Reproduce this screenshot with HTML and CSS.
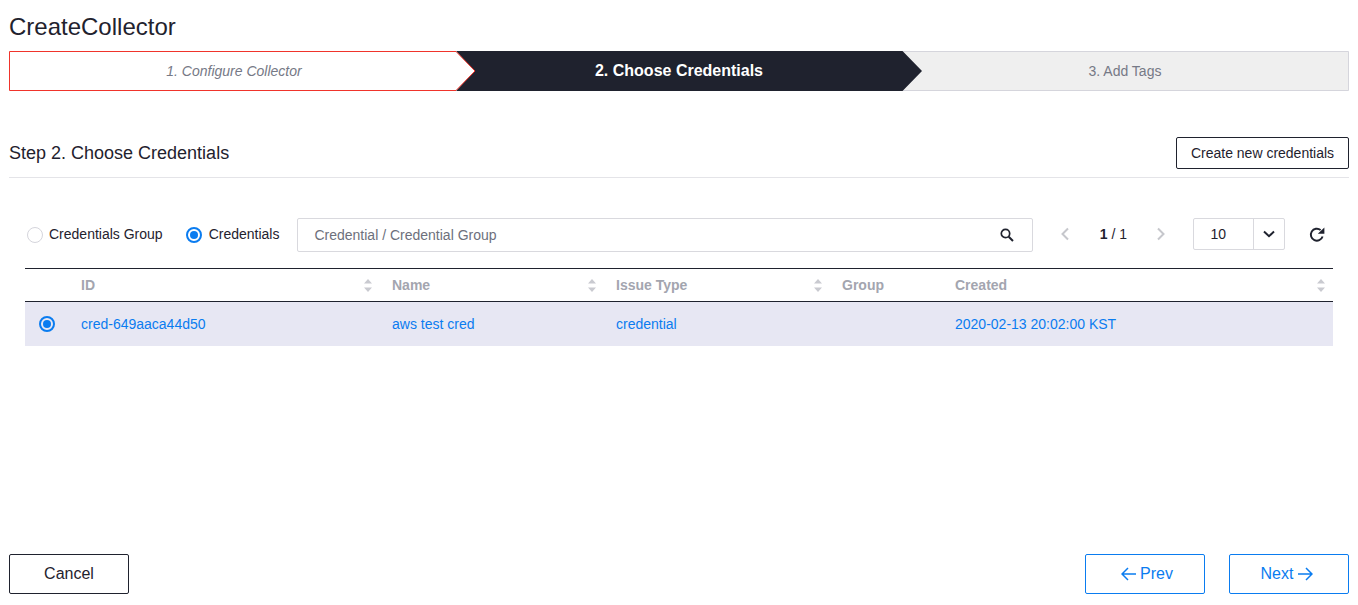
FILE: index.html
```html
<!DOCTYPE html>
<html lang="en">
<head>
<meta charset="utf-8">
<title>CreateCollector</title>
<link rel="stylesheet" href="styles.css">
</head>
<body>
<div class="page">
  <h1 class="title">CreateCollector</h1>
  <div class="steps">
    <svg class="steps-bg" width="1340" height="40" viewBox="0 0 1340 40">
      <path d="M893 0.5H1339.5V39.5H893L912 20Z" fill="#efefef" stroke="#d5d5dc"/>
      <path d="M447 0H893.5L913 20L893.5 40H447L465 20Z" fill="#1f222e"/>
      <path d="M0.5 0.5H447L466 20L447 39.5H0.5Z" fill="#fff" stroke="#f0342b"/>
    </svg>
    <div class="step step-done">1. Configure Collector</div>
    <div class="step step-active">2. Choose Credentials</div>
    <div class="step step-next">3. Add Tags</div>
  </div>
  <div class="section-head">
    <h2 class="section-title">Step 2. Choose Credentials</h2>
    <button class="btn-create">Create new credentials</button>
  </div>
  <div class="toolbar">
    <label class="radio-label"><span class="radio"></span><span class="radio-text">Credentials Group</span></label>
    <label class="radio-label radio-label-on"><span class="radio radio-on"></span><span class="radio-text">Credentials</span></label>
    <div class="search">
      <span class="search-text">Credential / Credential Group</span>
      <svg class="search-icon" width="16" height="16" viewBox="0 0 16 16"><circle cx="6.5" cy="6.5" r="4.2" fill="none" stroke="#1f222e" stroke-width="1.7"/><path d="M9.7 9.7L14 14" stroke="#1f222e" stroke-width="2"/></svg>
    </div>
    <div class="pager">
      <svg width="10" height="14" viewBox="0 0 10 14"><path d="M8 1.5L2.5 7L8 12.5" fill="none" stroke="#c6c7cc" stroke-width="2"/></svg>
      <span class="pager-text"><b>1</b> / 1</span>
      <svg width="10" height="14" viewBox="0 0 10 14"><path d="M2 1.5L7.5 7L2 12.5" fill="none" stroke="#c6c7cc" stroke-width="2"/></svg>
    </div>
    <div class="size-select">
      <span class="size-value">10</span>
      <span class="size-arrow"><svg width="12" height="8" viewBox="0 0 12 8"><path d="M1 1.5L6 6.2L11 1.5" fill="none" stroke="#1f222e" stroke-width="2"/></svg></span>
    </div>
    <svg class="refresh" width="16" height="16" viewBox="0 0 16 16"><path d="M13.6 9.5A6 6 0 1 1 11.6 3" fill="none" stroke="#1f222e" stroke-width="1.9"/><path d="M8.8 6.8H15.4V0.4Z" fill="#1f222e"/></svg>
  </div>
  <table class="grid">
    <colgroup><col class="c0"><col class="c1"><col class="c2"><col class="c3"><col class="c4"><col></colgroup>
    <thead>
      <tr>
        <th></th>
        <th><div class="th-in">ID<svg class="sort" width="8" height="13" viewBox="0 0 8 13"><path d="M4 0L8 4.5H0ZM0 8.5H8L4 13Z"/></svg></div></th>
        <th><div class="th-in">Name<svg class="sort" width="8" height="13" viewBox="0 0 8 13"><path d="M4 0L8 4.5H0ZM0 8.5H8L4 13Z"/></svg></div></th>
        <th><div class="th-in">Issue Type<svg class="sort" width="8" height="13" viewBox="0 0 8 13"><path d="M4 0L8 4.5H0ZM0 8.5H8L4 13Z"/></svg></div></th>
        <th><div class="th-in">Group</div></th>
        <th><div class="th-in">Created<svg class="sort" width="8" height="13" viewBox="0 0 8 13"><path d="M4 0L8 4.5H0ZM0 8.5H8L4 13Z"/></svg></div></th>
      </tr>
    </thead>
    <tbody>
      <tr>
        <td class="td-radio"><span class="radio radio-on"></span></td>
        <td>cred-649aaca44d50</td>
        <td>aws test cred</td>
        <td>credential</td>
        <td></td>
        <td>2020-02-13 20:02:00 KST</td>
      </tr>
    </tbody>
  </table>
  <div class="footer">
    <button class="btn btn-cancel">Cancel</button>
    <div class="footer-right">
      <button class="btn btn-blue btn-prev"><svg width="15" height="14" viewBox="0 0 15 14"><path d="M7 1L1 7L7 13M1 7H15" fill="none" stroke="#0a7cf0" stroke-width="1.5"/></svg>Prev</button>
      <button class="btn btn-blue btn-next">Next<svg width="15" height="14" viewBox="0 0 15 14"><path d="M8 1L14 7L8 13M14 7H0" fill="none" stroke="#0a7cf0" stroke-width="1.5"/></svg></button>
    </div>
  </div>
</div>
</body>
</html>
```
FILE: styles.css
```css
* { box-sizing: border-box; }
html, body { margin: 0; padding: 0; background: #fff; }
body { font-family: "Liberation Sans", Arial, sans-serif; color: #1f222e; overflow: hidden; }
.page { width: 1358px; height: 605px; padding: 0 9px; display: flex; flex-direction: column; }
.title { margin: 0; padding-top: 14px; height: 51px; font-size: 24px; line-height: 26px; font-weight: 400; }
.steps { position: relative; display: grid; grid-template-columns: 448px 444px 448px; height: 40px; }
.steps-bg { position: absolute; left: 0; top: 0; }
.step { position: relative; display: flex; align-items: center; justify-content: center; font-size: 14px; }
.step-done { color: #767986; font-style: italic; padding-left: 2px; }
.step-active { color: #fff; font-size: 16px; font-weight: 700; }
.step-next { color: #767986; }
.section-head { display: flex; align-items: center; justify-content: space-between; margin-top: 46px; height: 41px; padding-bottom: 9px; border-bottom: 1px solid #e4e4e8; }
.section-title { margin: 0; font-size: 18px; font-weight: 400; line-height: 22px; }
.btn-create { width: 173px; height: 32px; padding: 0; background: #fff; border: 1px solid #1f222e; border-radius: 2px; font: 14px "Liberation Sans", Arial, sans-serif; color: #1f222e; }
.toolbar { display: flex; align-items: center; margin-top: 40px; height: 34px; padding-left: 18px; }
.radio-label { display: flex; align-items: center; font-size: 14px; color: #1f222e; margin-right: 23px; }
.radio-label-on { margin-right: 18px; }
.radio-text { padding-bottom: 2px; }
.radio { display: flex; align-items: center; justify-content: center; width: 16px; height: 16px; border-radius: 50%; border: 1px solid #d5d5dc; background: #fff; margin-right: 6px; flex: none; }
.radio-on { border: 2px solid #0a7cf0; margin-right: 7px; }
.radio-on::after { content: ""; width: 8px; height: 8px; border-radius: 50%; background: #0a7cf0; }
.search { display: flex; align-items: center; justify-content: space-between; width: 736px; height: 34px; border: 1px solid #d9d9de; border-radius: 2px; padding: 0 17px 0 16px; font-size: 14px; color: #6d707c; }
.search-icon { flex: none; }
.pager { display: flex; align-items: center; width: 106px; margin-left: 27px; margin-bottom: 2px; justify-content: space-between; }
.pager-text { font-size: 14px; color: #1f222e; }
.size-select { display: flex; align-self: flex-start; width: 92px; height: 32px; margin-left: 27px; border: 1px solid #d9d9de; border-radius: 2px; font-size: 14px; }
.size-value { width: 60px; padding-left: 16px; line-height: 30px; border-right: 1px solid #d9d9de; }
.size-arrow { flex: 1; display: flex; align-items: center; justify-content: center; }
.refresh { margin-left: 24px; margin-bottom: 1px; }
.grid { width: 1308px; margin: 16px 0 0 16px; border-collapse: collapse; table-layout: fixed; border-top: 1px solid #1f222e; font-size: 14px; }
.c0 { width: 44px; } .c1 { width: 311px; } .c2 { width: 224px; } .c3 { width: 226px; } .c4 { width: 113px; }
th { height: 33px; padding: 0 12px; text-align: left; font-weight: 700; color: #a3a5af; border-bottom: 1px solid #1f222e; }
.th-in { display: flex; align-items: center; justify-content: space-between; }
.sort { display: block; margin-right: -4px; flex: none; fill: #c9cad0; }
td { height: 44px; padding: 0 12px; background: #e7e7f3; color: #0a7cf0; }
.td-radio { padding: 0 0 0 14px; }
.td-radio .radio { margin: 0; background: transparent; }
.footer { display: flex; justify-content: space-between; margin-top: auto; margin-bottom: 11px; }
.footer-right { display: flex; gap: 24px; }
.btn { display: flex; align-items: center; justify-content: center; gap: 4px; width: 120px; height: 40px; padding: 0; background: #fff; border-radius: 2px; font: 16px "Liberation Sans", Arial, sans-serif; }
.btn-cancel { border: 1px solid #1f222e; color: #1f222e; }
.btn-blue { border: 1px solid #0a7cf0; color: #0a7cf0; }
.btn-prev { padding-left: 4px; }
.btn-next { padding-right: 4px; gap: 5px; }
```
